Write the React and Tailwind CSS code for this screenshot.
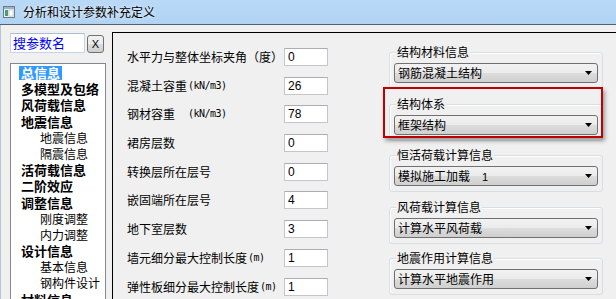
import React from "react";

function Select({ text, extra }) {
  return (
    <div className="h-[20px] mx-[4px] rounded-[3px] border border-[#707070] bg-[linear-gradient(#f2f2f2,#ebebeb_50%,#dddddd_50%,#cfcfcf)] flex items-center pl-[3px] pr-[4px] text-[12px] leading-[14px] text-black">
      <span className="flex-1 whitespace-nowrap">
        {text}
        {extra ? <span className="ml-[12px] font-['Liberation_Sans',sans-serif] text-[11px]">{extra}</span> : null}
      </span>
      <svg width="7" height="4" viewBox="0 0 7 4" className="mr-[1px]">
        <path d="M0 0H7L3.5 4Z" fill="#000" />
      </svg>
    </div>
  );
}

function Group({ title, text, extra }) {
  return (
    <div className="relative h-[37px] border border-[#d5dfe5] rounded-[3px] pt-[10px] shadow-[inset_1px_1px_0_#fff]">
      <span className="absolute left-[6px] top-[-9px] px-[1px] bg-[#f0f0f0] text-[12px] leading-[16px] whitespace-nowrap">
        {title}
      </span>
      <Select text={text} extra={extra} />
    </div>
  );
}

function Field({ label, unit, unitGap, value }) {
  return (
    <div className="flex items-center h-[18px]">
      <div className="w-[157px] flex items-center text-[12px] leading-[16px] whitespace-nowrap text-black">
        <span className={unitGap ? "w-[60px]" : ""}>{label}</span>
        {unit ? (
          <span className="font-['DejaVu_Sans_Mono',monospace] text-[10px] tracking-[-0.5px] ml-[1px]">{unit}</span>
        ) : null}
      </div>
      <div className="w-[44px] h-[18px] bg-white border border-[#c3c7cc] border-t-[#abadb3] flex items-center pl-[3px] font-['Liberation_Sans',sans-serif] text-[12px]">
        {value}
      </div>
    </div>
  );
}

const treeItems = [
  ["总信息", 0, true],
  ["多模型及包络", 0],
  ["风荷载信息", 0],
  ["地震信息", 0],
  ["地震信息", 1],
  ["隔震信息", 1],
  ["活荷载信息", 0],
  ["二阶效应", 0],
  ["调整信息", 0],
  ["刚度调整", 1],
  ["内力调整", 1],
  ["设计信息", 0],
  ["基本信息", 1],
  ["钢构件设计", 1],
  ["材料信息", 0],
];

export default function App() {
  return (
    <div className="w-[616px] h-[299px] overflow-hidden bg-[#f0f0f0] flex flex-col font-['Noto_Sans_CJK_SC',sans-serif] text-black">
      {/* Title bar */}
      <div className="h-[24px] shrink-0 bg-[linear-gradient(#b9d9f7,#b1d3f3)] flex items-center pl-[3px]">
        <svg width="12" height="12" viewBox="0 0 12 12" className="mr-[8px]">
          <rect x="0.5" y="0.5" width="11" height="11" fill="#e8eef2" stroke="#6f7a84" />
          <rect x="1" y="1" width="10" height="2" fill="#9fb3c4" />
          <rect x="2" y="4" width="3" height="6" fill="#4e9a6e" />
          <rect x="6" y="4" width="4" height="6" fill="#ffffff" stroke="#a9b4bd" strokeWidth="0.5" />
        </svg>
        <span className="text-[12px] leading-[16px] [text-shadow:0_0_4px_#ffffff]">分析和设计参数补充定义</span>
      </div>
      <div className="h-px shrink-0 bg-[#55606c]" />
      {/* Body */}
      <div className="flex-1 flex min-h-0">
        {/* Left column */}
        <div className="w-[112px] shrink-0 flex flex-col border-l border-l-[#b8c4cf] pl-[9px] pt-[8px]">
          <div className="flex items-start">
            <div className="w-[75px] h-[20px] bg-white border border-[#c5d5e6] border-t-[#a9bdd4] flex items-center pl-[2px] text-[13px] leading-[16px] text-[#0000ff] whitespace-nowrap">
              搜参数名
            </div>
            <div className="ml-[2px] mt-[2px] w-[17px] h-[18px] rounded-[3px] border border-[#707070] bg-[linear-gradient(#f2f2f2,#ebebeb_50%,#dddddd_50%,#cfcfcf)] flex items-center justify-center font-['Liberation_Sans',sans-serif] text-[11px]">
              X
            </div>
          </div>
          <div className="mt-[10px] w-[96px] flex-1 bg-white border border-[#828790] border-b-0 pt-[1px] overflow-hidden">
            {treeItems.map(([t, lvl, sel], i) => (
              <div
                key={i}
                className={
                  lvl === 0
                    ? "h-[16.2px] pl-[10px] text-[13px] leading-[16px] font-bold whitespace-nowrap"
                    : "h-[16.2px] pl-[29px] text-[12px] leading-[16px] whitespace-nowrap"
                }
              >
                {sel ? (
                  <span className="-ml-[2px] px-[2px] bg-[#3399ff] text-white inline-block leading-[14px]">{t}</span>
                ) : (
                  t
                )}
              </div>
            ))}
          </div>
        </div>
        {/* Main panel */}
        <div className="relative flex-1 mt-[7px] border-t border-l border-black flex">
          <div className="pl-[14px] pt-[15px] flex flex-col gap-[10.7px]">
            <Field label="水平力与整体坐标夹角（度）" value="0" />
            <Field label="混凝土容重" unit="(kN/m3)" unitGap value="26" />
            <Field label="钢材容重" unit="(kN/m3)" unitGap value="78" />
            <Field label="裙房层数" value="0" />
            <Field label="转换层所在层号" value="0" />
            <Field label="嵌固端所在层号" value="4" />
            <Field label="地下室层数" value="3" />
            <Field label="墙元细分最大控制长度" unit="(m)" value="1" />
            <Field label="弹性板细分最大控制长度" unit="(m)" value="1" />
          </div>
          <div className="ml-[61px] w-[214px] pt-[19px] flex flex-col gap-[14.5px]">
            <Group title="结构材料信息" text="钢筋混凝土结构" />
            <Group title="结构体系" text="框架结构" />
            <Group title="恒活荷载计算信息" text="模拟施工加载" extra="1" />
            <Group title="风荷载计算信息" text="计算水平风荷载" />
            <Group title="地震作用计算信息" text="计算水平地震作用" />
          </div>
          {/* Red annotation box */}
          <div className="absolute left-[270px] top-[54px] w-[220px] h-[51px] border-2 border-[#c00000] shadow-[2px_3px_4px_rgba(0,0,0,0.35)]" />
        </div>
      </div>
    </div>
  );
}
